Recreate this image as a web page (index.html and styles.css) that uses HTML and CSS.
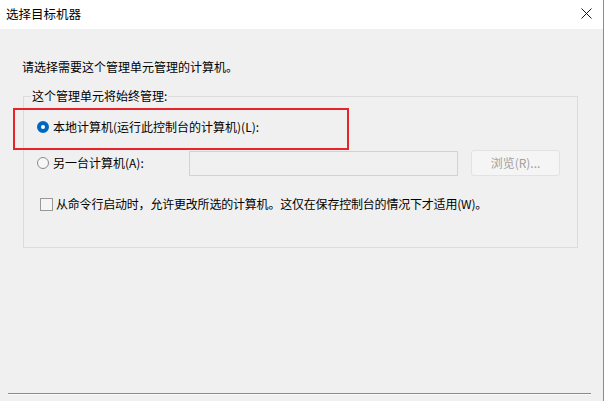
FILE: index.html
```html
<!DOCTYPE html>
<html lang="zh-CN">
<head>
    <meta charset="UTF-8">
    <title>选择目标机器</title>
    <link rel="stylesheet" href="styles.css">
</head>
<body>

<div class="window">
    <div class="titlebar">
        <span class="title">选择目标机器</span>
        <svg class="close" width="11" height="11" viewBox="0 0 11 11">
            <path d="M0.5 0.5 L10.5 10.5 M10.5 0.5 L0.5 10.5" stroke="#1a1a1a" stroke-width="1"/>
        </svg>
    </div>

    <div class="content">
        <p class="intro">请选择需要这个管理单元管理的计算机。</p>

        <fieldset class="group">
            <legend>这个管理单元将始终管理:</legend>

            <div class="row row-local">
                <span class="radio checked"></span>
                <span>本地计算机(运行此控制台的计算机)(L):</span>
            </div>

            <div class="row row-other">
                <div class="other-label">
                    <span class="radio"></span>
                    <span>另一台计算机(A):</span>
                </div>
                <div class="textbox"></div>
                <div class="btn">浏览(R)...</div>
            </div>

            <div class="row row-check">
                <span class="checkbox"></span>
                <span class="check-text">从命令行启动时，允许更改所选的计算机。这仅在保存控制台的情况下才适用(W)。</span>
            </div>
        </fieldset>

        <div class="spacer"></div>
        <div class="separator"></div>

        <!-- red annotation drawn over the first option -->
        <div class="highlight"></div>
    </div>
</div>

</body>
</html>
```

FILE: styles.css
```css
html, body {
    margin: 0;
    height: 100%;
}
body {
    background-color: #fff;
    font-family: "Noto Sans CJK SC", "Liberation Sans", sans-serif;
    font-size: 12px;
    color: #000;
}
.window {
    width: 603px;
    height: 401px;
    border-right: 1px solid #8c8c8c;
    display: flex;
    flex-direction: column;
}
.titlebar {
    height: 29px;
    background-color: #fff;
    display: flex;
    align-items: center;
    justify-content: space-between;
    padding: 0 11px 0 6px;
}
.title {
    font-size: 12.5px;
    line-height: 16px;
    margin-top: -1px;
}
.close {
    margin-top: -2px;
}
.content {
    position: relative;
    flex-grow: 1;
    background-color: #f0f0f0;
    padding: 30px 0 0 22px;
    display: flex;
    flex-direction: column;
}
.intro {
    margin: 0;
    line-height: 16px;
}
.group {
    margin: 13px 0 0 1px;
    padding: 0 0 35px 13px;
    width: 540px;
    border: 1px solid #dcdcdc;
}
.group legend {
    padding: 0 1px;
    margin-left: -6px;
    line-height: 16px;
}
.row {
    display: flex;
    align-items: center;
    line-height: 16px;
}
.row-local {
    margin-top: 15px;
    gap: 4px;
}
.row-other {
    margin-top: 15px;
    height: 26px;
}
.other-label {
    width: 152px;
    display: flex;
    align-items: center;
    gap: 4px;
}
.row-check {
    margin-top: 20px;
    margin-left: 3px;
    gap: 3px;
}
.check-text {
    letter-spacing: -0.2px;
}
.radio {
    width: 10px;
    height: 10px;
    border-radius: 50%;
    border: 1px solid #8a8a8a;
    background-color: #f7f7f7;
    flex-shrink: 0;
}
.radio.checked {
    width: 4px;
    height: 4px;
    border: 4px solid #0067c0;
    background-color: #fff;
}
.textbox {
    width: 267px;
    height: 23px;
    border: 1px solid #d2d2d2;
    background-color: #f0f0f0;
}
.btn {
    width: 87px;
    height: 24px;
    margin-left: 13px;
    border: 1px solid #e2e2e2;
    border-radius: 3px;
    background-color: #f5f5f5;
    color: #a0a0a0;
    text-align: center;
    line-height: 24px;
}
.checkbox {
    width: 11px;
    height: 11px;
    border: 1px solid #999;
    background-color: #f5f5f5;
    flex-shrink: 0;
}
.spacer {
    flex-grow: 1;
}
.separator {
    margin: 0 12px 6px -14px;
    height: 1px;
    background-color: #8a8a8a;
    border-bottom: 1px solid #fafafa;
}
.highlight {
    position: absolute;
    left: 13px;
    top: 79px;
    width: 332px;
    height: 38px;
    border: 2px solid #e5242b;
}
```
